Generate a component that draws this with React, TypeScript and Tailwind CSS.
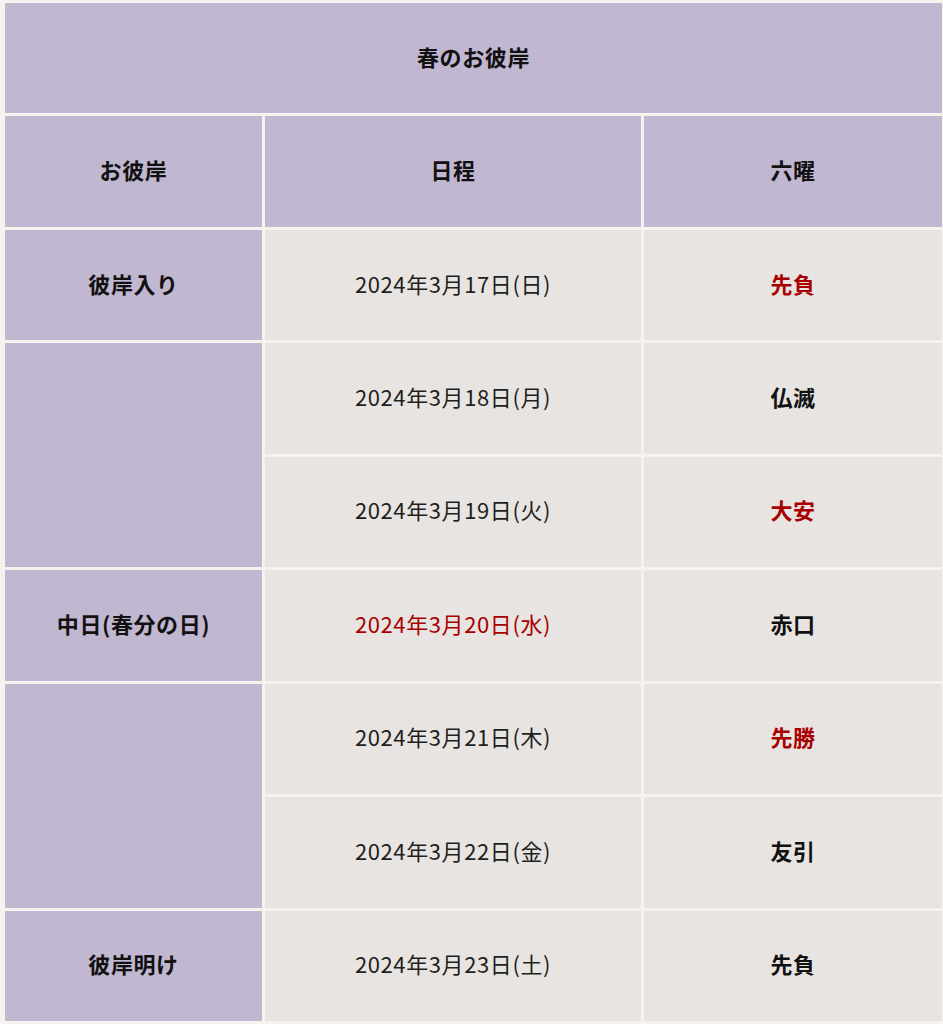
import React from "react";

const font = { fontFamily: '"Noto Sans CJK JP", "Noto Sans", sans-serif' };

type Row = { date: string; rokuyo: string; red: boolean };

const rows: Row[] = [
  { date: "2024年3月17日(日)", rokuyo: "先負", red: true },
  { date: "2024年3月18日(月)", rokuyo: "仏滅", red: false },
  { date: "2024年3月19日(火)", rokuyo: "大安", red: true },
  { date: "2024年3月20日(水)", rokuyo: "赤口", red: false },
  { date: "2024年3月21日(木)", rokuyo: "先勝", red: true },
  { date: "2024年3月22日(金)", rokuyo: "友引", red: false },
  { date: "2024年3月23日(土)", rokuyo: "先負", red: false },
];

const purple = "bg-[#c1b7d1] flex items-center justify-center pb-[4px] font-bold text-[#111] text-[22px] tracking-[0.6px]";
const gray = "bg-[#e8e4e1] flex items-center justify-center pb-[4px] text-[22px] tracking-[0.6px]";

export default function App() {
  return (
    <div className="min-h-screen bg-[#f6f2ef]" style={font}>
      <div className="pl-[5px] pr-[1px] pt-[3px] pb-[3px]">
        <div className="grid grid-cols-[257px_376px_298px] auto-rows-[110.44px] gap-[3px]">
          <div className={`${purple} col-span-3`}>春のお彼岸</div>
          <div className={purple}>お彼岸</div>
          <div className={purple}>日程</div>
          <div className={purple}>六曜</div>

          <div className={purple}>彼岸入り</div>
          <div className={`${gray} text-[#1f1f1f]`}>{rows[0].date}</div>
          <div className={`${gray} font-bold text-[#a80000]`}>{rows[0].rokuyo}</div>

          <div className={`${purple} row-span-2`}></div>
          <div className={`${gray} text-[#1f1f1f]`}>{rows[1].date}</div>
          <div className={`${gray} font-bold text-[#111]`}>{rows[1].rokuyo}</div>
          <div className={`${gray} text-[#1f1f1f]`}>{rows[2].date}</div>
          <div className={`${gray} font-bold text-[#a80000]`}>{rows[2].rokuyo}</div>

          <div className={purple}>中日(春分の日)</div>
          <div className={`${gray} text-[#a80000]`}>{rows[3].date}</div>
          <div className={`${gray} font-bold text-[#111]`}>{rows[3].rokuyo}</div>

          <div className={`${purple} row-span-2`}></div>
          <div className={`${gray} text-[#1f1f1f]`}>{rows[4].date}</div>
          <div className={`${gray} font-bold text-[#a80000]`}>{rows[4].rokuyo}</div>
          <div className={`${gray} text-[#1f1f1f]`}>{rows[5].date}</div>
          <div className={`${gray} font-bold text-[#111]`}>{rows[5].rokuyo}</div>

          <div className={purple}>彼岸明け</div>
          <div className={`${gray} text-[#1f1f1f]`}>{rows[6].date}</div>
          <div className={`${gray} font-bold text-[#111]`}>{rows[6].rokuyo}</div>
        </div>
      </div>
    </div>
  );
}
